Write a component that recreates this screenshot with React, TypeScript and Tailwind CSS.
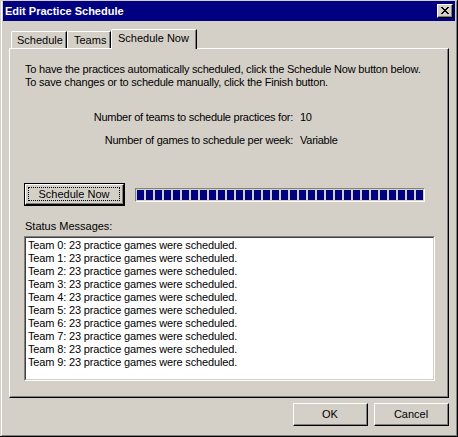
import React from "react";

const FACE = "bg-[#d4d0c8]";

const font = { fontFamily: '"Liberation Sans", Arial, sans-serif' };

const teams = Array.from({ length: 10 }, (_, i) => `Team ${i}: 23 practice games were scheduled.`);

const Btn = ({ label, width }: { label: string; width: string }) => (
  <div className={`${width} h-[23px] border-t border-l border-white border-r border-b border-r-black border-b-black`}>
    <div className="h-full w-full border-r border-b border-[#808080] flex items-center justify-center text-black">
      {label}
    </div>
  </div>
);

const App = () => {
  return (
    <div
      className={`w-[458px] h-[437px] ${FACE} border-r border-b border-black pl-[1px] pt-[1px] text-[11px] leading-[13px] text-black`}
      style={font}
    >
      <div className="h-full border-l border-white border-r border-b border-r-[#808080] border-b-[#808080] px-[1px] flex flex-col">
        {/* Title bar */}
        <div className="h-[20px] bg-[#000080] flex items-center justify-between pl-[2px] pr-[2px] shrink-0">
          <span className="text-white font-bold text-[11px]">Edit Practice Schedule</span>
          <div className={`w-[16px] h-[14px] ${FACE} border-t border-l border-white border-r border-b border-r-black border-b-black`}>
            <div className="w-full h-full border-r border-b border-[#808080] flex items-center justify-center">
              <svg width="8" height="7" viewBox="0 0 8 7" shapeRendering="crispEdges">
                <path d="M0 0h2v1h-2zM6 0h2v1h-2zM1 1h2v1h-2zM5 1h2v1h-2zM2 2h4v1h-4zM3 3h2v1h-2zM2 4h4v1h-4zM1 5h2v1h-2zM5 5h2v1h-2zM0 6h2v1h-2zM6 6h2v1h-2z" fill="#000" />
              </svg>
            </div>
          </div>
        </div>

        {/* Tabs + panel */}
        <div className="ml-[6px] w-[440px] mt-[8px]">
          <div className="flex items-end h-[19px] pl-[2px]">
            <div className="w-[56px] h-[17px] border-l border-t border-white border-r border-r-black rounded-tl-[2px]">
              <div className="h-full border-r border-[#808080] pl-[5px] pt-[2px]">Schedule</div>
            </div>
            <div className="w-[44px] h-[17px] border-l border-t border-white border-r border-r-black rounded-tl-[2px]">
              <div className="h-full border-r border-[#808080] pl-[6px] pt-[2px]">Teams</div>
            </div>
            <div className={`relative z-10 -mb-[1px] w-[86px] h-[20px] ${FACE} border-l border-t border-white border-r border-r-black rounded-tl-[2px]`}>
              <div className="h-full border-r border-[#808080] pl-[6px] pt-[2px]">Schedule Now</div>
            </div>
          </div>

          <div className="h-[350px] border-l border-t border-white border-r border-b border-r-black border-b-black">
            <div className="h-full border-r border-b border-[#808080] pl-[14px] pt-[14px]">
              <div className="pl-[1px] tracking-[-0.2px]">
                <div>To have the practices automatically scheduled, click the Schedule Now button below.</div>
                <div>To save changes or to schedule manually, click the Finish button.</div>
              </div>

              <div className="mt-[22px] flex tracking-[-0.25px]">
                <div className="w-[269px] text-right">Number of teams to schedule practices for:</div>
                <div className="ml-[7px]">10</div>
              </div>
              <div className="mt-[10px] flex tracking-[-0.25px]">
                <div className="w-[269px] text-right">Number of games to schedule per week:</div>
                <div className="ml-[7px]">Variable</div>
              </div>

              <div className="mt-[36px] flex items-center">
                <div className="w-[101px] h-[23px] border border-black">
                  <div className="h-full border-t border-l border-white border-r border-b border-r-black border-b-black">
                    <div className="h-full border-r border-b border-[#808080] p-[2px]">
                      <div className="h-full border border-dotted border-black flex items-center justify-center">
                        Schedule Now
                      </div>
                    </div>
                  </div>
                </div>
                <div className="ml-[10px] w-[290px] h-[14px] border-t border-l border-[#808080] border-r border-b border-r-white border-b-white p-[1px]">
                  <div className="flex gap-[2px] h-full">
                    {Array.from({ length: 32 }).map((_, i) => (
                      <div key={i} className="w-[7px] h-full bg-[#000080]" />
                    ))}
                  </div>
                </div>
              </div>

              <div className="mt-[14px] pl-[1px]">Status Messages:</div>

              <div className="mt-[3px] w-[411px] h-[145px] border-t border-l border-[#808080] border-r border-b border-r-white border-b-white">
                <div className="h-full bg-white border-t border-l border-[#404040] border-r border-b border-r-[#d4d0c8] border-b-[#d4d0c8] pl-[2px] pt-[1px] tracking-[-0.15px]">
                  {teams.map((t) => (
                    <div key={t}>{t}</div>
                  ))}
                </div>
              </div>
            </div>
          </div>

          <div className="mt-[5px] flex justify-end gap-[6px]">
            <Btn label="OK" width="w-[75px]" />
            <Btn label="Cancel" width="w-[75px]" />
          </div>
        </div>
      </div>
    </div>
  );
};

export default App;
